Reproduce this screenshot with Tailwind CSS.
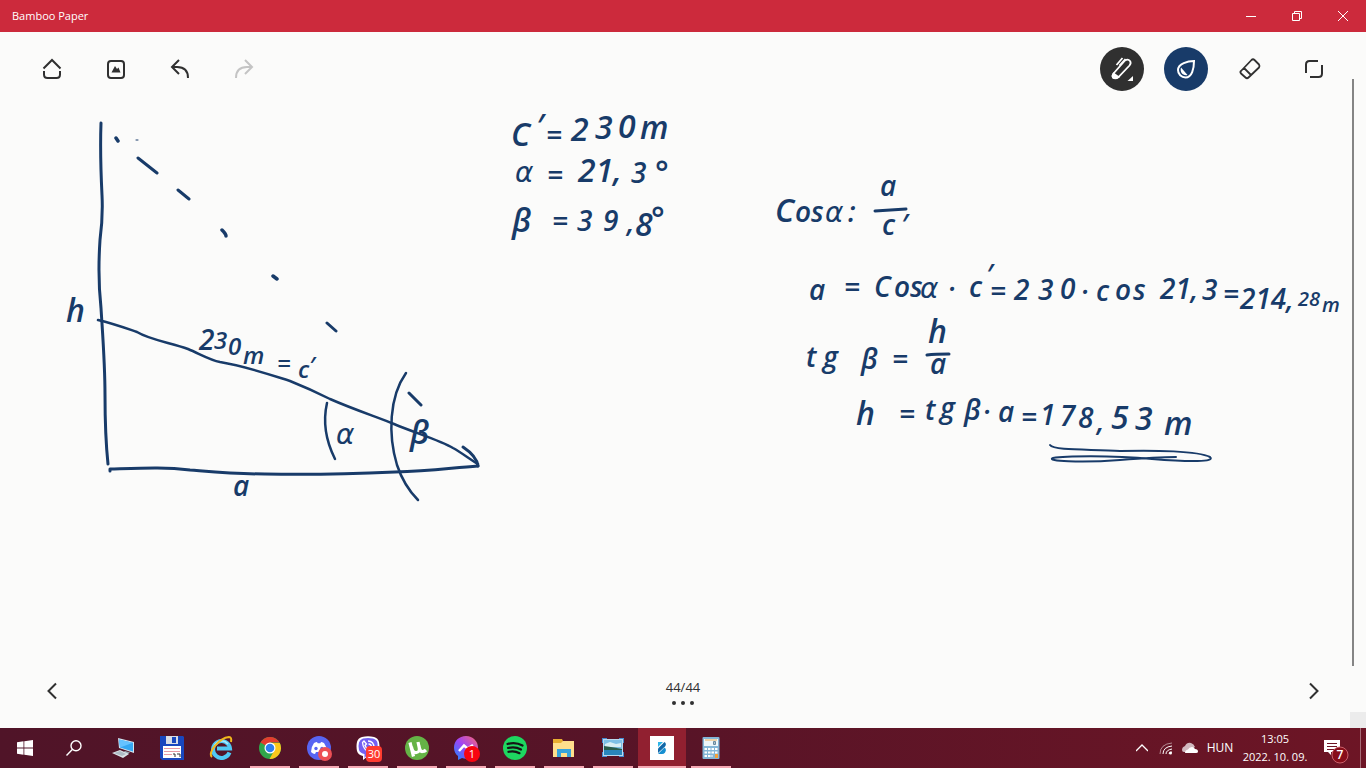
<!DOCTYPE html>
<html lang="en">
<head>
    <meta charset="UTF-8">
    <meta name="viewport" content="width=device-width, initial-scale=1.0">
    <title>Bamboo Paper</title>
    <script src="https://cdn.jsdelivr.net/npm/@tailwindcss/browser@4"></script>
</head>
<body class="h-screen flex flex-col overflow-hidden bg-[#fbfbfa] font-['Open_Sans',sans-serif] text-xs">

<!-- Title bar -->
<header class="h-8 shrink-0 flex items-center justify-between bg-[#cc2a3c] text-white pl-3">
    <h1 class="text-[11px]">Bamboo Paper</h1>
    <div class="flex h-full">
        <button aria-label="Minimize" class="w-[46px] flex items-center justify-center">
            <svg class="size-3" viewBox="0 0 12 12" fill="none" stroke="currentColor" shape-rendering="crispEdges"><path d="M1 6.500h10"/></svg>
        </button>
        <button aria-label="Restore" class="w-[46px] flex items-center justify-center">
            <svg class="size-3" viewBox="0 0 12 12" fill="none" stroke="currentColor"><path d="M1.500 3.500h7v7h-7zM3.500 3.500v-2h7v7h-2"/></svg>
        </button>
        <button aria-label="Close" class="w-[46px] flex items-center justify-center">
            <svg class="size-3" viewBox="0 0 12 12" fill="none" stroke="currentColor"><path d="M1 1l10 10M11 1L1 11"/></svg>
        </button>
    </div>
</header>

<main class="relative flex-1 min-h-0 flex flex-col justify-between text-[#303030]">

    <!-- Ink on the page -->
    <svg class="absolute inset-0 size-full" viewBox="0 32 1366 696" preserveAspectRatio="xMinYMin meet" role="img" aria-label="Note page">
        <g fill="none" stroke="#183b69" stroke-width="3" stroke-linecap="round" stroke-linejoin="round">
            <!-- wall and ground -->
            <path d="M101 123C100 150 101 175 102 195C103 215 102 225 100 240C98 270 99 290 101 308C103 340 105 365 105 395C105 425 106 445 108 464"/>
            <path d="M110 471v-2C145 468 165 467 190 470C215 472 235 474 265 474C315 475 350 474 395 472C430 471 450 468 478 466"/>
            <!-- slope and arrow head -->
            <path stroke-width="2.500" d="M98 320C115 324 128 329 137 332C150 340 172 343 188 349C200 354 210 360 220 362C245 366 268 374 290 381C310 389 320 394 330 399C355 410 380 418 394 424C415 433 440 440 453 448C462 453 471 460 478 464"/>
            <path d="M463 447C472 453 477 459 478 466"/>
            <!-- dashed sight line -->
            <path stroke-width="3.500" d="M116 138l2 3M222 230c2 2 4 4 4 6M273 276l4 3"/>
            <path stroke-width="3" d="M138 158l19 15M178 190l11 9M327 323l9 8M409 393l12 12"/>
            <path stroke-width="1" d="M136 140h2"/>
            <!-- angle arcs -->
            <path stroke-width="2.500" d="M327 403C322 425 327 443 335 459M406 373C389 397 388 435 397 465C402 480 409 491 418 500"/>
            <!-- fraction bars -->
            <path d="M875 211l31-2M927 355c8-1 15-1 22-1"/>
            <!-- double underline -->
            <path stroke-width="2" d="M1050 445C1054 451 1092 449 1120 451C1155 450 1198 451 1210 457C1216 462 1190 462 1152 459C1110 455 1064 456 1053 458C1045 461 1080 463 1120 460C1145 458 1160 457 1176 457"/>
        </g>

        <g fill="#183b69" class="italic font-semibold">
            <g class="text-[32px]">
                <text x="66" y="322">h</text>
                <text x="511" y="146">C</text><text x="536" y="137">′</text>
                <text x="571" y="141">2</text><text x="595" y="139">3</text><text x="618" y="138">0</text><text x="640" y="139">m</text>
                <text x="578" y="182">21,</text><text x="655" y="184">°</text>
                <text x="512" y="232">β</text>
                <text x="635" y="236">8</text><text x="651" y="230">°</text>
                <text x="775" y="222">C</text>
                <text x="410" y="444">β</text>
                <text x="928" y="343">h</text>
                <text x="856" y="425">h</text>
                <text x="1111" y="429">5</text><text x="1135" y="430">3</text><text x="1164" y="435">m</text>
            </g>
            <g class="text-[28px]">
                <text x="233" y="496">a</text>
                <text x="199" y="350">2</text>
                <text x="546" y="145">=</text><text x="547" y="185">=</text><text x="552" y="231">=</text>
                <text x="631" y="183">3</text>
                <text x="577" y="231">3</text><text x="603" y="231">9</text><text x="627" y="232">,</text>
                <text x="795" y="222">os</text><text x="848" y="222">:</text>
                <text x="880" y="196">a</text><text x="882" y="235">c</text><text x="901" y="235">′</text>
                <text x="809" y="300">a</text><text x="844" y="297">=</text>
                <text x="874" y="297">C</text><text x="894" y="297">os</text>
                <text x="948" y="299">·</text><text x="969" y="297">c</text><text x="986" y="285">′</text><text x="990" y="301">=</text>
                <text x="1014" y="300">2</text><text x="1038" y="300">3</text><text x="1060" y="299">0</text><text x="1081" y="302">·</text>
                <text x="1096" y="301">c</text><text x="1115" y="300">o</text><text x="1133" y="300">s</text>
                <text x="1160" y="299">21,</text><text x="1202" y="300">3</text><text x="1223" y="304">=</text>
                <text x="1240" y="309">214,</text>
                <text x="806" y="367">t</text><text x="823" y="367">g</text><text x="861" y="369">β</text><text x="892" y="369">=</text><text x="930" y="374">a</text>
                <text x="899" y="424">=</text><text x="925" y="420">t</text><text x="940" y="418">g</text><text x="964" y="420">β</text>
                <text x="983" y="422">·</text><text x="998" y="422">a</text><text x="1021" y="427">=</text>
                <text x="1040" y="425">1</text><text x="1060" y="426">7</text><text x="1078" y="428">8</text><text x="1097" y="431">,</text>
            </g>
            <g class="text-2xl">
                <text x="214" y="349">3</text><text x="228" y="355">0</text><text x="243" y="364">m</text>
                <text x="277" y="372">=</text><text x="298" y="378">c</text><text x="309" y="374">′</text>
            </g>
            <g class="text-xl">
                <text x="1298" y="306">28</text><text x="1322" y="312">m</text>
            </g>
        </g>

        <g fill="#183b69" class="italic text-[28px] font-['DejaVu_Sans',sans-serif]">
            <text x="515" y="182">α</text>
            <text x="336" y="444">α</text>
            <text x="825" y="222">α</text>
            <text x="920" y="298">α</text>
        </g>
    </svg>

    <!-- Toolbar -->
    <nav class="relative h-[74px] px-5 flex items-center justify-between">
        <div class="flex">
            <button aria-label="Home" class="w-16 h-11 flex items-center justify-center">
                <svg class="size-6" viewBox="0 0 24 24" fill="none" stroke="currentColor" stroke-width="2"><path d="M3.500 11.500L12 3l8.500 8.500M4 14v3.500Q4 21 7.500 21h9Q20 21 20 17.500V14"/></svg>
            </button>
            <button aria-label="Add picture" class="w-16 h-11 flex items-center justify-center">
                <svg class="size-6" viewBox="0 0 24 24" fill="none" stroke="currentColor" stroke-width="2"><rect x="4" y="4" width="16" height="17" rx="3"/><path d="M7.500 15.500L11 9l2 3 1.500-1.500 2 5z" fill="currentColor" stroke="none"/></svg>
            </button>
            <button aria-label="Undo" class="w-16 h-11 flex items-center justify-center">
                <svg class="size-6" viewBox="0 0 24 24" fill="none" stroke="currentColor" stroke-width="2"><path d="M11 3L4 10l7 7M4 10h5c7 0 11 4 11 11"/></svg>
            </button>
            <button aria-label="Redo" disabled class="w-16 h-11 flex items-center justify-center text-[#c4c4c4]">
                <svg class="size-6" viewBox="0 0 24 24" fill="none" stroke="currentColor" stroke-width="2"><path d="M13 3l7 7-7 7M20 10h-5C8 10 4 14 4 21"/></svg>
            </button>
        </div>
        <div class="flex">
            <button aria-label="Pen" class="w-16 h-11 flex items-center justify-center">
                <span class="size-11 rounded-full bg-[#303030] text-white flex items-center justify-center">
                    <svg class="size-6" viewBox="0 0 24 24" fill="none" stroke="currentColor" stroke-width="1.800"><path d="M3.500 16.500L15 3.500Q18 1.500 20 4q1.500 2-.500 4.500L8.500 20Q5.500 22 3 20.500 2 18.500 3.500 16.500zM6.500 8L12.500 1M9.500 8.500l6-6.500"/><path d="M3.500 16.500l5 3.500q-3 2.500-5.500.500-1.200-2 .500-4z" fill="currentColor"/><path d="M23 19v5h-5.500z" fill="currentColor" stroke="none"/></svg>
                </span>
            </button>
            <button aria-label="Color" class="w-16 h-11 flex items-center justify-center">
                <span class="size-11 rounded-full bg-[#183b69] text-white flex items-center justify-center">
                    <svg class="size-6" viewBox="0 0 24 24" fill="none" stroke="currentColor" stroke-width="2"><path d="M20 4C14 4 4 6.500 4 13a7.500 7.500 0 0 0 7.500 7.500c6.500 0 8.500-9 8.500-16.500z"/><path d="M7 10.500L13.500 18C9 19 5.500 15.500 7 10.500z" fill="currentColor" stroke="none"/></svg>
                </span>
            </button>
            <button aria-label="Eraser" class="w-16 h-11 flex items-center justify-center">
                <svg class="size-6" viewBox="0 0 24 24" fill="none" stroke="currentColor" stroke-width="1.800" stroke-linejoin="round"><path d="M3 14L13.500 3Q15 1.500 16.500 3L21 7.500Q22 9 21 10.500L10.500 20.500Q9 22 7.500 20.500L3 16.500Q1.800 15 3 14zM6 11L13 18"/></svg>
            </button>
            <button aria-label="Full screen" class="w-16 h-11 flex items-center justify-center">
                <svg class="size-6" viewBox="0 0 24 24" fill="none" stroke="currentColor" stroke-width="2"><path d="M4 16V7.500Q4 4 7.500 4H16M20 8v8.500Q20 20 16.500 20H8"/></svg>
            </button>
        </div>
    </nav>

    <!-- Page navigation -->
    <footer class="relative h-[74px] px-5 flex items-center justify-between">
        <button aria-label="Previous page" class="w-16 h-11 flex items-center justify-center">
            <svg class="size-6" viewBox="0 0 24 24" fill="none" stroke="currentColor" stroke-width="2"><path d="M16 4.500L8.500 12l7.500 7.500"/></svg>
        </button>
        <div class="flex flex-col items-center gap-1">
            <span class="text-[13px] leading-5">44/44</span>
            <button aria-label="More" class="flex gap-[5px]">
                <span class="size-1 rounded-full bg-[#303030]"></span>
                <span class="size-1 rounded-full bg-[#303030]"></span>
                <span class="size-1 rounded-full bg-[#303030]"></span>
            </button>
        </div>
        <button aria-label="Next page" class="w-16 h-11 flex items-center justify-center">
            <svg class="size-6" viewBox="0 0 24 24" fill="none" stroke="currentColor" stroke-width="2"><path d="M8 4.500l7.500 7.500L8 19.500"/></svg>
        </button>
    </footer>

    <div class="absolute right-3 top-[47px] bottom-[62px] w-0.5 bg-[#858585]"></div>
    <div class="absolute right-0 bottom-0 size-4 bg-[#ececec]"></div>
</main>

<!-- Taskbar -->
<div class="h-10 shrink-0 flex justify-between text-white bg-linear-to-r from-[#501428] via-[#581427] to-[#6d1525]">
    <div class="flex gap-px pl-px">
        <button aria-label="Start" class="w-12 flex items-center justify-center">
            <svg class="size-4" viewBox="0 0 16 16" fill="currentColor"><path d="M0 2.200L6.500 1.300v6.300H0zM7.300 1.200L16 0v7.600H7.300zM0 8.400h6.500v6.300L0 13.800zM7.300 8.400H16V16l-8.700-1.200z"/></svg>
        </button>
        <button aria-label="Search" class="w-12 flex items-center justify-center">
            <svg class="size-4" viewBox="0 0 16 16" fill="none" stroke="currentColor" stroke-width="1.400"><circle cx="10" cy="5.800" r="5"/><path d="M6.300 9.400L.5 15.500"/></svg>
        </button>
        <button aria-label="This PC" class="w-12 flex items-center justify-center">
            <svg class="size-6" viewBox="0 0 24 24"><path d="M7 2l16 4v11L8 12z" fill="#d5e5ee"/><path d="M8 3.500l14 3.200v8.800L9 11.500z" fill="#35a7f2"/><path d="M8 3.500l14 3.200-13 4.800z" fill="#65c2ff"/><path d="M14 15l5 1.500-3 2-4-2z" fill="#96a7b1"/><path d="M1 17l8-3 9 4-6 4z" fill="#dce3e8"/><path d="M3 17l6-2 6 3-4 2z" fill="#aebbc4"/></svg>
        </button>
        <button aria-label="Save" class="w-12 flex items-center justify-center">
            <svg class="size-6" viewBox="0 0 24 24"><path d="M0 0h23l1 1v23H2l-2-2z" fill="#1947be"/><path d="M6 0h12v8H6z" fill="#d9dde5"/><path d="M12 1h4v6h-4z" fill="#1947be"/><path d="M3 10h18v12H3z" fill="#fff"/><path d="M4 12.500h16M4 15.500h16M4 18.500h8" stroke="#e79aa4"/><path d="M13 18h2v3M17 18h3v3" fill="none" stroke="#333"/></svg>
        </button>
        <button aria-label="Internet Explorer" class="w-12 flex items-center justify-center">
            <svg class="size-6" viewBox="0 0 24 24" fill="none"><path d="M20.500 16.500a8.500 8.500 0 1 1 .5-4H8" stroke="#50c8f4" stroke-width="4"/><path d="M5 11a8 8 0 0 1 14-3" stroke="#a9e9ff" stroke-width="1.500"/><path d="M3 21C-2 17 10 2 20 1q3 0 2 5" stroke="#f1b81c" stroke-width="2"/></svg>
        </button>
        <button aria-label="Chrome" class="relative w-12 flex items-center justify-center">
            <svg class="size-6" viewBox="0 0 24 24"><circle cx="12" cy="12" r="11" fill="#30a64b"/><path d="M12 12L2.500 6.500A11 11 0 0 1 21.500 6.500H12z" fill="#e43c2e"/><path d="M12 7h9.800A11 11 0 0 1 11.500 23l5-9z" fill="#fcc71c"/><circle cx="12" cy="12" r="5.500" fill="#fff"/><circle cx="12" cy="12" r="4.300" fill="#2f7df0"/></svg>
            <span class="absolute bottom-0 inset-x-1 h-0.5 bg-[#f5a9b4]"></span>
        </button>
        <button aria-label="Discord" class="relative w-12 flex items-center justify-center">
            <svg class="size-6 overflow-visible" viewBox="0 0 24 24"><circle cx="12" cy="12" r="12" fill="#5865f2"/><path d="M7 7q2-1 3-1l.7 1.200h2.600L14 6q1 0 3 1 3 4 3 9-2 2-4 2l-1-2H9l-1 2q-2 0-4-2 0-5 3-9z" fill="#fff"/><circle cx="9" cy="12.500" r="1.700" fill="#5865f2"/><circle cx="15" cy="12.500" r="1.700" fill="#5865f2"/><circle cx="18" cy="18" r="7" fill="#ed4f55"/><circle cx="18" cy="18" r="3" fill="#fff"/></svg>
            <span class="absolute bottom-0 inset-x-1 h-0.5 bg-[#f5a9b4]"></span>
        </button>
        <button aria-label="Viber" class="relative w-12 flex items-center justify-center">
            <svg class="size-6" viewBox="0 0 24 24"><path d="M6 1Q12-.5 18 1q4 1 5 5 1 6 0 9-1 4-6 5h-5l-5 4v-4q-5-1-6-5-1-5 0-9 1-4 5-5z" fill="#fff"/><path d="M7 2.500q5-1 10 0 4 1 4.500 4.500.5 4 0 7-1 4-5 4.500h-5L8.500 22v-4Q4 17 3 14q-1-4 0-7.500Q4 3.500 7 2.500z" fill="#7360f2"/><path d="M8 5L6.500 6.500Q7 14 14.500 17L17 15l-3-2-1.500 1Q10 12 9 9.500L10.500 8zM12 5q6 0 6 7M12.500 8q3 0 3 3.500" fill="none" stroke="#fff" stroke-width="1.300"/></svg>
            <span class="absolute left-[22px] top-[18px] size-4 rounded bg-[#ff3b30] text-[11px] leading-4 text-center">30</span>
            <span class="absolute bottom-0 inset-x-1 h-0.5 bg-[#f5a9b4]"></span>
        </button>
        <button aria-label="uTorrent" class="relative w-12 flex items-center justify-center">
            <svg class="size-6" viewBox="0 0 24 24"><circle cx="12" cy="12" r="12" fill="#65b346"/><path d="M5 6.500l3.500 14M6.500 11q1 6 5 5.500 4-.5 2.500-6l-1-4.500M14 10q1 6 3.500 5.500 2 0 3.500-1.500" fill="none" stroke="#fff" stroke-width="3.200"/></svg>
            <span class="absolute bottom-0 inset-x-1 h-0.5 bg-[#f5a9b4]"></span>
        </button>
        <button aria-label="Messenger" class="relative w-12 flex items-center justify-center">
            <svg class="size-6" viewBox="0 0 24 24">
                <defs><linearGradient id="msg" x1="0" y1="1" x2="1" y2="0"><stop stop-color="#168cff"/><stop offset=".5" stop-color="#a044f5"/><stop offset="1" stop-color="#ff6770"/></linearGradient></defs>
                <path d="M12 0C5 0 0 5 0 11.500c0 4 1.500 6.500 4 8.500v4l4-2q2 .7 4 .7c7 0 12-5 12-11.200S19 0 12 0z" fill="url(#msg)"/><path d="M5 15l5-5.500 3.500 3L19 9" fill="none" stroke="#fff" stroke-width="2.500"/>
            </svg>
            <span class="absolute left-[22px] top-[18px] size-4 rounded-full bg-[#f80510] text-[11px] leading-4 text-center">1</span>
            <span class="absolute bottom-0 inset-x-1 h-0.5 bg-[#f5a9b4]"></span>
        </button>
        <button aria-label="Spotify" class="relative w-12 flex items-center justify-center">
            <svg class="size-6" viewBox="0 0 24 24"><circle cx="12" cy="12" r="12" fill="#1ed760"/><path d="M4.500 8q8-2.500 15 1.500M5 12q7-2 13 1.500M5.500 15.800q6-1.500 11 1.400" fill="none" stroke="#151515" stroke-width="2.200" stroke-linecap="round"/></svg>
            <span class="absolute bottom-0 inset-x-1 h-0.5 bg-[#f5a9b4]"></span>
        </button>
        <button aria-label="File Explorer" class="relative w-12 flex items-center justify-center">
            <svg class="size-6" viewBox="0 0 24 24"><path d="M1 3h9l1 2h11v16H1z" fill="#e8ae31"/><path d="M1 7h8l2-2h11v16H1z" fill="#ffdf8c"/><path d="M5 21v-8h14v8h-4v-4H9v4z" fill="#37a4dc"/></svg>
            <span class="absolute bottom-0 inset-x-1 h-0.5 bg-[#f5a9b4]"></span>
        </button>
        <button aria-label="Photo viewer" class="relative w-12 flex items-center justify-center">
            <svg class="size-6" viewBox="0 0 24 24"><path d="M1 2h5v5H1zM18 2h5v5h-5zM1 16h5v5H1zM18 16h5v5h-5z" fill="#458bd0"/><path d="M2 3h20v17H2z" fill="#b9d9ee"/><path d="M3 4h18v15H3z" fill="#7dbfe6"/><path d="M4 8l5-2 6 2 5-1v4H4z" fill="#d7edf4"/><path d="M3 10q8 1 18 3v2H3z" fill="#295d4c"/><path d="M3 14h18v5H3z" fill="#2986bb"/></svg>
            <span class="absolute bottom-0 inset-x-1 h-0.5 bg-[#f5a9b4]"></span>
        </button>
        <button aria-label="Bamboo Paper" class="relative w-12 flex items-center justify-center bg-[#912030]">
            <svg class="size-6" viewBox="0 0 24 24"><path d="M0 0h24v24H0z" fill="#fff"/><path d="M8 6h5l-5 5z" fill="#2fb5e8"/><path d="M8 12.500l6.500-6.500q2.500 2 .5 4.500L8 17z" fill="#1268a8"/><path d="M8 18l6.500-6.500q2.500 2 .5 5-1 1.500-3 1.500z" fill="#168fd1"/></svg>
            <span class="absolute bottom-0 inset-x-0 h-0.5 bg-[#f5a9b4]"></span>
        </button>
        <button aria-label="Calculator" class="relative w-12 flex items-center justify-center">
            <svg class="size-6" viewBox="0 0 24 24"><rect x="3.500" y="1" width="17" height="22" rx="1" fill="#84b6d7"/><path d="M5 3h14v7H5z" fill="#eef6fa"/><path d="M6 4h12" stroke="#efae56"/><path d="M14.500 5.500h2v3h-2zM14.500 7h2" fill="none" stroke="#68899f"/><path d="M5.500 13h13M5.500 16.500h13M5.500 20h8" stroke="#fff" stroke-width="2.200" stroke-dasharray="2.500 1"/><path d="M16 18h3v4h-3z" fill="#f1a13b"/></svg>
            <span class="absolute bottom-0 inset-x-1 h-0.5 bg-[#f5a9b4]"></span>
        </button>
    </div>

    <div class="flex items-center">
        <button aria-label="Show hidden icons" class="w-6 flex justify-center">
            <svg class="size-3" viewBox="0 0 12 12" fill="none" stroke="currentColor" stroke-width="1.300"><path d="M0 9l6-6 6 6"/></svg>
        </button>
        <button aria-label="Network" class="w-6 flex justify-center">
            <svg class="size-4" viewBox="0 0 16 16" fill="none" stroke="currentColor"><path d="M2 14Q2 4 14 3" opacity=".5"/><path d="M5 14Q5 7 14 6M8 14q0-4 6-5M11 14q0-2 3-2"/><circle cx="12.500" cy="13" r="1.500" fill="currentColor" stroke="none"/></svg>
        </button>
        <button aria-label="OneDrive" class="w-6 flex justify-center">
            <svg class="size-4" viewBox="0 0 16 16"><path d="M0 10q0-3 3-4 2-4 6-3 3 1 4 4l-8 5H2q-2 0-2-2z" fill="#d1b9bf"/><path d="M3 13q0-3 3-3.500Q7 7 10 7q2 0 3 2 3 0 3 2.500 0 1.500-2 1.500z" fill="#fff"/></svg>
        </button>
        <button class="w-9">HUN</button>
        <button class="w-[74px] flex flex-col items-center text-[11px] leading-[18px]"><span>13:05</span><span>2022. 10. 09.</span></button>
        <button aria-label="Notifications" class="relative w-12 h-full pl-[11px] flex items-center">
            <svg class="size-6 overflow-visible" viewBox="0 0 24 24"><path d="M1 4h16v12H8v3l-3-3H1z" fill="#fff"/><path d="M4 7.500h10M4 10.500h10M4 13.500h7" stroke="#6d1525"/><circle cx="17" cy="19" r="8" fill="#870d19" stroke="#c9606b"/></svg>
            <span class="absolute left-5 top-[19px] size-4 leading-4 text-center font-semibold">7</span>
        </button>
        <div class="w-1.5 h-full border-l border-[#a76b76]"></div>
    </div>
</div>
</body>
</html>
